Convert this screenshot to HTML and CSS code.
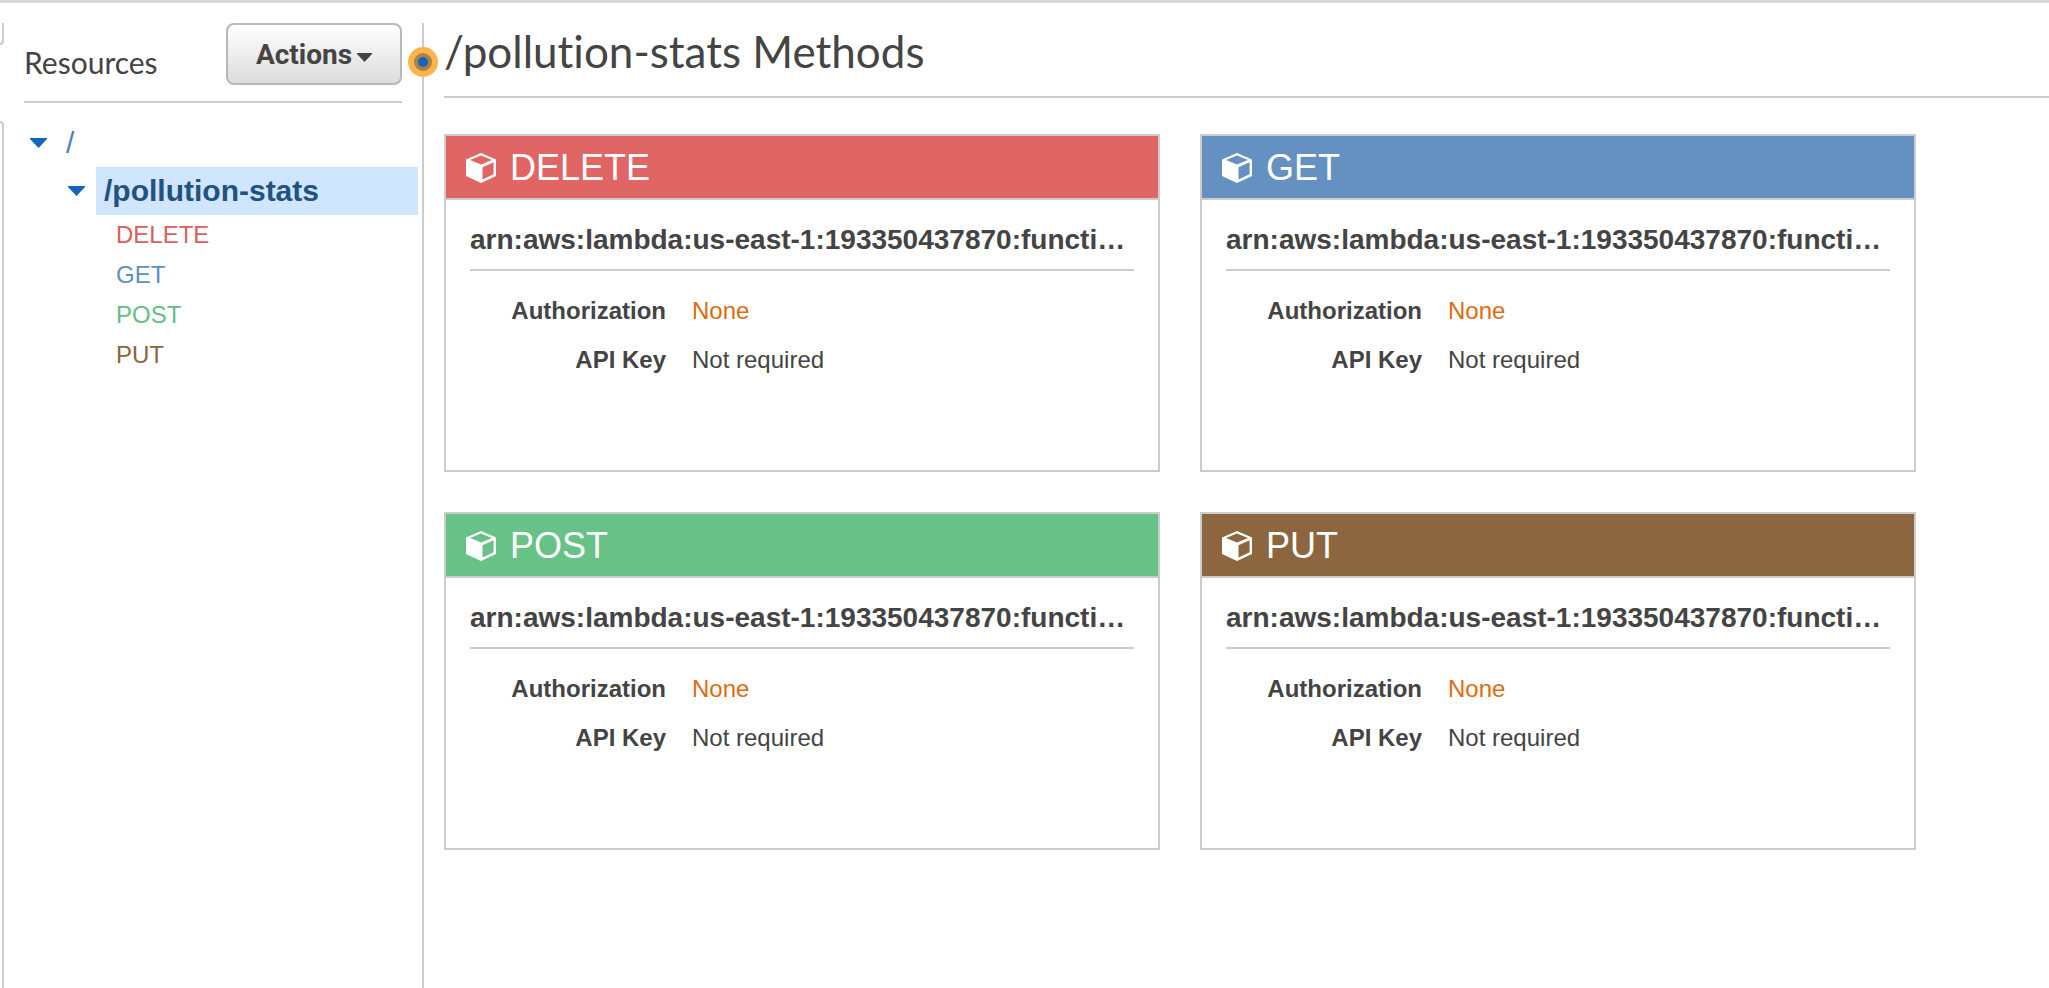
FILE: index.html
```
<!DOCTYPE html>
<html lang="en">
<head>
<meta charset="utf-8">
<title>/pollution-stats Methods</title>
<link rel="stylesheet" href="styles.css">
</head>
<body>
<svg class="sprite" aria-hidden="true">
  <symbol id="cube" viewBox="0 0 30 30">
    <path fill="#fff" fill-rule="evenodd" d="M15 0 L30 6.500 V23 L15 30 L0 23 V6.500 Z M15 2.500 L4 7 L15 11.500 L26 7 Z M16.500 14.200 V26.600 L27.600 21.300 V9.300 Z"/>
  </symbol>
  <symbol id="caret" viewBox="0 0 17 10">
    <path fill="currentColor" d="M0 0 H17 V1 L8.500 10 L0 1 Z"/>
  </symbol>
</svg>
<div class="page">
  <div class="rail">
    <div class="rail-top"></div>
    <div class="rail-bottom"></div>
  </div>
  <aside class="sidebar">
    <header class="sidebar-head">
      <h2 class="sidebar-title">Resources</h2>
      <button class="actions" type="button">Actions<svg class="actions-caret"><use href="#caret"/></svg></button>
    </header>
    <nav class="tree">
      <div class="node">
        <svg class="caret"><use href="#caret"/></svg>
        <a class="node-link" href="#root">/</a>
      </div>
      <div class="node node-child">
        <svg class="caret"><use href="#caret"/></svg>
        <a class="node-link node-selected" href="#pollution-stats">/pollution-stats</a>
      </div>
      <ul class="methods">
        <li><a class="text-delete" href="#delete">DELETE</a></li>
        <li><a class="text-get" href="#get">GET</a></li>
        <li><a class="text-post" href="#post">POST</a></li>
        <li><a class="text-put" href="#put">PUT</a></li>
      </ul>
    </nav>
  </aside>
  <div class="divider" role="separator" aria-orientation="vertical">
    <svg class="handle" viewBox="0 0 30 30"><circle cx="15" cy="15" r="15" fill="#fdb44a"/><circle cx="15" cy="15" r="9" fill="#a98345"/><circle cx="15" cy="15" r="5" fill="#1166bb"/></svg>
  </div>
  <main class="main">
    <h1 class="title">/pollution-stats Methods</h1>
    <div class="cards">
      <section class="card" id="delete">
        <h3 class="card-head bg-delete"><svg class="cube"><use href="#cube"/></svg>DELETE</h3>
        <div class="card-body">
          <p class="arn">arn:aws:lambda:us-east-1:193350437870:functi…</p>
          <dl class="props"><dt>Authorization</dt><dd class="none">None</dd><dt>API Key</dt><dd>Not required</dd></dl>
        </div>
      </section>
      <section class="card" id="get">
        <h3 class="card-head bg-get"><svg class="cube"><use href="#cube"/></svg>GET</h3>
        <div class="card-body">
          <p class="arn">arn:aws:lambda:us-east-1:193350437870:functi…</p>
          <dl class="props"><dt>Authorization</dt><dd class="none">None</dd><dt>API Key</dt><dd>Not required</dd></dl>
        </div>
      </section>
      <section class="card" id="post">
        <h3 class="card-head bg-post"><svg class="cube"><use href="#cube"/></svg>POST</h3>
        <div class="card-body">
          <p class="arn">arn:aws:lambda:us-east-1:193350437870:functi…</p>
          <dl class="props"><dt>Authorization</dt><dd class="none">None</dd><dt>API Key</dt><dd>Not required</dd></dl>
        </div>
      </section>
      <section class="card" id="put">
        <h3 class="card-head bg-put"><svg class="cube"><use href="#cube"/></svg>PUT</h3>
        <div class="card-body">
          <p class="arn">arn:aws:lambda:us-east-1:193350437870:functi…</p>
          <dl class="props"><dt>Authorization</dt><dd class="none">None</dd><dt>API Key</dt><dd>Not required</dd></dl>
        </div>
      </section>
    </div>
  </main>
</div>
</body>
</html>
```
FILE: styles.css
```
* { box-sizing: border-box; }
body {
  margin: 0;
  background: #fff;
  color: #444;
  font-family: "Liberation Sans", Arial, sans-serif;
  font-size: 24px;
}
h1, h2, h3, p, dl, dd, ul { margin: 0; padding: 0; }
a { text-decoration: none; }
.sprite { display: none; }

.page {
  display: flex;
  min-height: 100vh;
  padding-top: 20px;
  border-top: 3px solid #d9d9d9;
}

/* Collapsed panel at the window's left edge */
.rail {
  display: flex;
  flex-direction: column;
  gap: 76px;
  width: 4px;
}
.rail-top {
  height: 22px;
  border: solid #ccc;
  border-width: 0 2px 2px 0;
  border-bottom-right-radius: 4px;
}
.rail-bottom {
  flex: 1;
  border: solid #ccc;
  border-width: 2px 2px 0 0;
  border-top-right-radius: 4px;
}

.sidebar { width: 418px; padding-left: 20px; }
.sidebar-head {
  display: flex;
  justify-content: space-between;
  align-items: flex-start;
  height: 80px;
  margin-right: 20px;
  border-bottom: 2px solid #ccc;
}
.sidebar-title {
  padding-top: 21px;
  font: 400 30px/36px Lato, sans-serif;
}
.actions {
  display: flex;
  align-items: center;
  justify-content: center;
  gap: 5px;
  width: 176px;
  height: 62px;
  padding: 2px 0 0;
  border: 2px solid #b8b8b8;
  border-radius: 8px;
  background: linear-gradient(#fff, #dcdcdc);
  color: #444;
  font: 700 28px/32px Roboto, sans-serif;
}
.actions-caret { width: 15px; height: 9px; margin-top: 4px; }

.tree { padding-top: 16px; }
.node { display: flex; align-items: center; height: 48px; padding-left: 6px; }
.node-child { padding: 0 4px 0 44px; }
.caret { width: 17px; height: 10px; color: #1166bb; flex: none; }
.node-link {
  flex: 1;
  margin-left: 11px;
  padding-left: 8px;
  color: #4a7fbd;
  font-size: 30px;
  line-height: 48px;
}
.node-selected { background: #cfe6fe; color: #22527f; font-weight: 700; }
.methods { padding-left: 92px; list-style: none; line-height: 40px; }
.text-delete { color: #d9605f; }
.text-get { color: #5f8fc0; }
.text-post { color: #64bd82; }
.text-put { color: #8b653c; }

.divider { position: relative; width: 2px; background: #ccc; }
.handle { position: absolute; top: 24px; left: -14px; width: 30px; height: 30px; }

.main { flex: 1; min-width: 0; padding-left: 20px; }
.title {
  height: 75px;
  border-bottom: 2px solid #ccc;
  font: 400 44px/56px Lato, sans-serif;
  font-variant-ligatures: none;
}
.cards {
  display: grid;
  grid-template-columns: repeat(2, minmax(0, 1fr));
  gap: 40px;
  max-width: 1472px;
  padding-top: 36px;
}
.card { min-height: 338px; border: 2px solid #ccc; }
.card-head {
  display: flex;
  align-items: center;
  gap: 14px;
  height: 64px;
  padding: 2px 0 0 20px;
  border-bottom: 2px solid #ccc;
  color: #fff;
  font-size: 36px;
  font-weight: 400;
}
.cube { width: 30px; height: 30px; }
.bg-delete { background: #e06666; }
.bg-get { background: #6491c1; }
.bg-post { background: #68c287; }
.bg-put { background: #8c663e; }
.card-body { padding: 20px 24px; }
.arn {
  height: 51px;
  overflow: hidden;
  border-bottom: 2px solid #ccc;
  font-size: 28px;
  font-weight: 700;
  line-height: 40px;
  text-overflow: ellipsis;
  white-space: nowrap;
}
.props {
  display: grid;
  grid-template-columns: 196px 1fr;
  column-gap: 26px;
  padding-top: 15px;
  line-height: 49px;
}
.props dt { font-weight: 700; text-align: right; }
.none { color: #dd6b10; }
```
